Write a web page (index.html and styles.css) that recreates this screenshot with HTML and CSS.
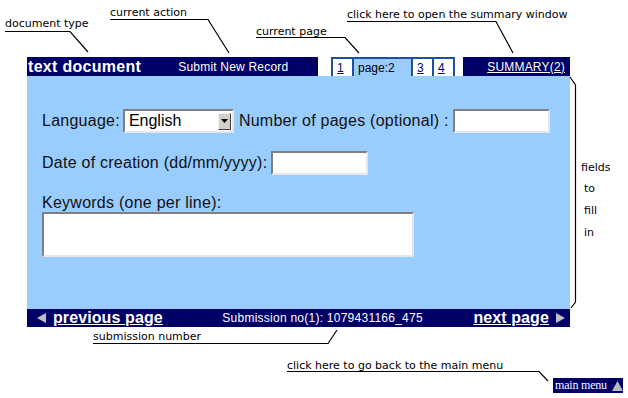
FILE: index.html
```html
<!DOCTYPE html>
<html>
<head>
<meta charset="utf-8">
<link rel="stylesheet" href="styles.css">
</head>
<body>
<div class="canvas">
  <div class="panel">
    <div class="topbar">
      <div class="doc-area">
        <span class="doc-type">text document</span>
        <span class="action">Submit New Record</span>
      </div>
      <div class="tabs">
        <a class="tab" href="#">1</a>
        <span class="tab tab-active">page:2</span>
        <a class="tab" href="#">3</a>
        <a class="tab" href="#">4</a>
      </div>
      <div class="summary-area"><a class="summary" href="#">SUMMARY(2)</a></div>
    </div>
    <div class="content">
      <div class="row row-1">
        <span class="label">Language:</span>
        <div class="select">
          <span class="select-text">English</span>
          <span class="select-btn"><svg width="7" height="4" viewBox="0 0 7 4"><path d="M0 0H7L3.5 4Z" fill="#000"/></svg></span>
        </div>
        <span class="label label-pages">Number of pages (optional) :</span>
        <div class="input input-pages"></div>
      </div>
      <div class="row row-2">
        <span class="label">Date of creation (dd/mm/yyyy):</span>
        <div class="input input-date"></div>
      </div>
      <div class="block-keywords">
        <span class="label">Keywords (one per line):</span>
        <div class="input textarea"></div>
      </div>
    </div>
    <div class="bottombar">
      <a class="nav nav-prev" href="#"><svg class="tri" width="10" height="10" viewBox="0 0 10 10"><path d="M0 5L9 0V10Z" fill="#c0c0c0"/></svg><span class="nav-text">previous page</span></a>
      <span class="subno">Submission no(1): 1079431166_475</span>
      <a class="nav nav-next" href="#"><span class="nav-text">next page</span><svg class="tri" width="10" height="10" viewBox="0 0 10 10"><path d="M10 5L1 0V10Z" fill="#c0c0c0"/></svg></a>
    </div>
  </div>

  <svg class="lines" width="628" height="398" viewBox="0 0 628 398">
    <g fill="none" stroke="#000" stroke-width="1.2">
      <path d="M5 31.5H70L88 52"/>
      <path d="M110 19.5H208L229 53"/>
      <path d="M256 37.5H345L359 53"/>
      <path d="M347 21.5H496L513 53"/>
      <path d="M570 77L575.5 85V302L571 308"/>
      <path d="M93 343.5H328L337 330"/>
      <path d="M287 371.5H539L548 381"/>
    </g>
  </svg>

  <span class="note note-doctype">document type</span>
  <span class="note note-action">current action</span>
  <span class="note note-page">current page</span>
  <span class="note note-summary">click here to open the summary window</span>
  <span class="note note-fields">fields</span>
  <span class="note note-to">to</span>
  <span class="note note-fill">fill</span>
  <span class="note note-in">in</span>
  <span class="note note-subno">submission number</span>
  <span class="note note-back">click here to go back to the main menu</span>

  <a class="mainmenu" href="#"><span class="mm-text">main menu</span><svg width="11" height="10" viewBox="0 0 11 10"><path d="M5.5 0L11 10H0Z" fill="#b8b8c0"/></svg></a>
</div>
</body>
</html>
```

FILE: styles.css
```css
* { box-sizing: border-box; }
html, body { margin: 0; padding: 0; background: #fff; }
.canvas {
  position: relative;
  width: 628px;
  height: 398px;
  overflow: hidden;
  font-family: "Liberation Sans", Arial, sans-serif;
}
.panel {
  margin: 57px 0 0 27px;
  width: 543px;
  display: flex;
  flex-direction: column;
}
.topbar {
  display: flex;
  height: 19px;
}
.doc-area {
  width: 291px;
  background: #000066;
  display: flex;
  align-items: center;
  color: #fff;
}
.doc-type {
  font-weight: bold;
  font-size: 16px;
  letter-spacing: 0.3px;
  margin-left: 1px;
}
.action {
  font-size: 12px;
  letter-spacing: 0.2px;
  margin-left: 37px;
}
.tabs {
  width: 145px;
  display: flex;
  padding-left: 13px;
  background: #fff;
}
.tab {
  display: flex;
  align-items: center;
  height: 19px;
  font-size: 12px;
  color: #000066;
  background: #fff;
  border-top: 2px solid #1f4f9f;
  border-left: 2px solid #1f4f9f;
  padding: 1px 0 0 4px;
  width: 21px;
}
.tabs .tab:last-child {
  border-right: 2px solid #1f4f9f;
  width: 23px;
}
.tab-active {
  background: #99ccff;
  color: #000;
  width: 59px;
  text-decoration: none;
}
.summary-area {
  flex: 1;
  background: #000066;
  display: flex;
  align-items: center;
  justify-content: flex-end;
  padding-right: 5px;
}
.summary {
  color: #fff;
  font-size: 12px;
  letter-spacing: 0.2px;
}
.content {
  background: #99ccff;
  height: 233px;
  padding: 33px 0 0 15px;
  display: flex;
  flex-direction: column;
}
.row {
  display: flex;
  align-items: center;
  height: 24px;
}
.label {
  font-size: 16px;
  color: #111;
  white-space: nowrap;
  letter-spacing: 0.25px;
}
.select {
  margin-left: 3px;
  width: 111px;
  height: 24px;
  background: #fff;
  border-top: 2px solid #7f7f7f;
  border-left: 2px solid #7f7f7f;
  border-bottom: 2px solid #e6e6e6;
  border-right: 2px solid #e6e6e6;
  display: flex;
  align-items: center;
  justify-content: space-between;
  padding: 0 1px 0 4px;
}
.select-text { font-size: 16px; color: #000; }
.select-btn {
  width: 13px;
  height: 17px;
  background: #d4d0c8;
  border-top: 1px solid #f4f4f4;
  border-left: 1px solid #f4f4f4;
  border-right: 1px solid #404040;
  border-bottom: 1px solid #404040;
  display: flex;
  align-items: center;
  justify-content: center;
}
.label-pages { margin-left: 5px; }
.input {
  height: 24px;
  background: #fff;
  border-top: 2px solid #7f7f7f;
  border-left: 2px solid #7f7f7f;
  border-bottom: 2px solid #e6e6e6;
  border-right: 2px solid #e6e6e6;
}
.input-pages { width: 97px; margin-left: 4px; }
.row-2 { margin-top: 18px; }
.input-date { width: 97px; margin-left: 4px; }
.block-keywords {
  display: flex;
  flex-direction: column;
  margin-top: 19px;
}
.block-keywords .label { line-height: 18px; }
.textarea {
  width: 372px;
  height: 45px;
  margin-top: 0;
}
.bottombar {
  height: 18px;
  background: #000066;
  display: flex;
  align-items: center;
  justify-content: space-between;
  color: #fff;
}
.nav {
  display: flex;
  align-items: center;
  color: #fff;
  text-decoration: none;
}
.nav-text {
  font-weight: bold;
  font-size: 16px;
  text-decoration: underline;
  letter-spacing: 0.1px;
}
.nav-prev { margin-left: 10px; }
.nav-prev .tri { margin-right: 6px; }
.nav-next { margin-right: 5px; }
.nav-next .tri { margin-left: 6px; }
.subno {
  font-size: 12px;
  letter-spacing: 0.25px;
  margin-left: 9px;
}
.lines {
  position: absolute;
  left: 0;
  top: 0;
  pointer-events: none;
}
.note {
  position: absolute;
  font-family: "DejaVu Sans", sans-serif;
  font-size: 11px;
  line-height: 12px;
  color: #000;
  white-space: nowrap;
}
.note-doctype { left: 5px; top: 18px; }
.note-action { left: 110px; top: 7px; }
.note-page { left: 256px; top: 26px; }
.note-summary { left: 347px; top: 9px; }
.note-fields { left: 581px; top: 162px; }
.note-to { left: 584px; top: 183px; }
.note-fill { left: 584px; top: 205px; }
.note-in { left: 584px; top: 227px; }
.note-subno { left: 93px; top: 331px; }
.note-back { left: 287px; top: 360px; }
.mainmenu {
  position: absolute;
  left: 553px;
  top: 378px;
  width: 70px;
  height: 15px;
  background: #000066;
  color: #fff;
  text-decoration: none;
  display: flex;
  align-items: center;
  padding-left: 2px;
  gap: 5px;
}
.mm-text {
  font-family: "Liberation Serif", "Times New Roman", serif;
  font-size: 12px;
  letter-spacing: -0.2px;
}
```
